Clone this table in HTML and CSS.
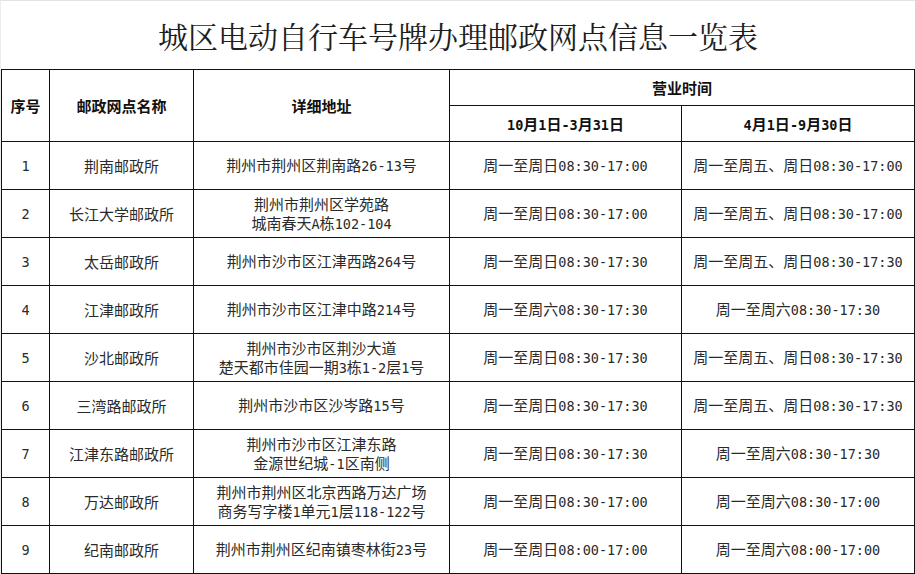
FILE: index.html
```html
<!DOCTYPE html>
<html lang="zh-CN">
<head>
<meta charset="utf-8">
<title>城区电动自行车号牌办理邮政网点信息一览表</title>
<link rel="stylesheet" href="styles.css">
</head>
<body>
<div class="sheet">
  <h1 class="title">城区电动自行车号牌办理邮政网点信息一览表</h1>
  <table class="grid">
    <colgroup>
      <col class="c-no"><col class="c-name"><col class="c-addr"><col class="c-t1"><col class="c-t2">
    </colgroup>
    <thead>
      <tr class="h1">
        <th rowspan="2">序号</th>
        <th rowspan="2">邮政网点名称</th>
        <th rowspan="2">详细地址</th>
        <th colspan="2">营业时间</th>
      </tr>
      <tr class="h2">
        <th><span class="n">10</span>月<span class="n">1</span>日<span class="n">-3</span>月<span class="n">31</span>日</th>
        <th><span class="n">4</span>月<span class="n">1</span>日<span class="n">-9</span>月<span class="n">30</span>日</th>
      </tr>
    </thead>
    <tbody>
      <tr>
        <td><span class="n">1</span></td>
        <td>荆南邮政所</td>
        <td>荆州市荆州区荆南路<span class="n">26-13</span>号</td>
        <td>周一至周日<span class="n">08:30-17:00</span></td>
        <td>周一至周五、周日<span class="n">08:30-17:00</span></td>
      </tr>
      <tr>
        <td><span class="n">2</span></td>
        <td>长江大学邮政所</td>
        <td>荆州市荆州区学苑路<br>城南春天<span class="n">A</span>栋<span class="n">102-104</span></td>
        <td>周一至周日<span class="n">08:30-17:00</span></td>
        <td>周一至周五、周日<span class="n">08:30-17:00</span></td>
      </tr>
      <tr>
        <td><span class="n">3</span></td>
        <td>太岳邮政所</td>
        <td>荆州市沙市区江津西路<span class="n">264</span>号</td>
        <td>周一至周日<span class="n">08:30-17:30</span></td>
        <td>周一至周五、周日<span class="n">08:30-17:30</span></td>
      </tr>
      <tr>
        <td><span class="n">4</span></td>
        <td>江津邮政所</td>
        <td>荆州市沙市区江津中路<span class="n">214</span>号</td>
        <td>周一至周六<span class="n">08:30-17:30</span></td>
        <td>周一至周六<span class="n">08:30-17:30</span></td>
      </tr>
      <tr>
        <td><span class="n">5</span></td>
        <td>沙北邮政所</td>
        <td>荆州市沙市区荆沙大道<br>楚天都市佳园一期<span class="n">3</span>栋<span class="n">1-2</span>层<span class="n">1</span>号</td>
        <td>周一至周日<span class="n">08:30-17:30</span></td>
        <td>周一至周五、周日<span class="n">08:30-17:30</span></td>
      </tr>
      <tr>
        <td><span class="n">6</span></td>
        <td>三湾路邮政所</td>
        <td>荆州市沙市区沙岑路<span class="n">15</span>号</td>
        <td>周一至周日<span class="n">08:30-17:30</span></td>
        <td>周一至周五、周日<span class="n">08:30-17:30</span></td>
      </tr>
      <tr>
        <td><span class="n">7</span></td>
        <td>江津东路邮政所</td>
        <td>荆州市沙市区江津东路<br>金源世纪城<span class="n">-1</span>区南侧</td>
        <td>周一至周日<span class="n">08:30-17:30</span></td>
        <td>周一至周六<span class="n">08:30-17:30</span></td>
      </tr>
      <tr>
        <td><span class="n">8</span></td>
        <td>万达邮政所</td>
        <td>荆州市荆州区北京西路万达广场<br>商务写字楼<span class="n">1</span>单元<span class="n">1</span>层<span class="n">118-122</span>号</td>
        <td>周一至周日<span class="n">08:30-17:00</span></td>
        <td>周一至周六<span class="n">08:30-17:00</span></td>
      </tr>
      <tr>
        <td><span class="n">9</span></td>
        <td>纪南邮政所</td>
        <td>荆州市荆州区纪南镇枣林街<span class="n">23</span>号</td>
        <td>周一至周日<span class="n">08:00-17:00</span></td>
        <td>周一至周六<span class="n">08:00-17:00</span></td>
      </tr>
    </tbody>
  </table>
</div>
</body>
</html>
```
FILE: styles.css
```css
html, body {
  margin: 0;
  padding: 0;
  background: #fff;
}
body {
  font-family: "Noto Sans CJK SC", "Noto Sans", sans-serif;
  color: #222;
}
.sheet {
  width: 915px;
  height: 574px;
  box-sizing: border-box;
  border-top: 1px solid #e4e4e4;
  border-left: 1px solid #ececec;
  overflow: hidden;
}
.title {
  margin: 0;
  height: 68px;
  display: flex;
  align-items: center;
  justify-content: center;
  font-family: "Noto Serif CJK SC", "Noto Sans CJK SC", serif;
  font-weight: 400;
  font-size: 30px;
  letter-spacing: 0;
  color: #1e1e1e;
}
.grid {
  border-collapse: collapse;
  table-layout: fixed;
  width: 914px;
  font-size: 15px;
}
.c-no { width: 48px; }
.c-name { width: 144px; }
.c-addr { width: 256px; }
.c-t1 { width: 232px; }
.c-t2 { width: 233px; }
.grid th, .grid td {
  border: 1px solid #111;
  padding: 0;
  text-align: center;
  vertical-align: middle;
  white-space: nowrap;
}
.grid th {
  font-weight: 700;
  color: #111;
}
.grid td {
  font-weight: 400;
  line-height: 19px;
  color: #2a2a2a;
}
.h1 th, .h2 th {
  height: 35px;
}
.grid tbody tr {
  height: 48px;
}
.n {
  font-family: "DejaVu Sans Mono", "Liberation Mono", monospace;
  font-size: 13.5px;
}
.grid th .n {
  font-weight: 700;
}
```
